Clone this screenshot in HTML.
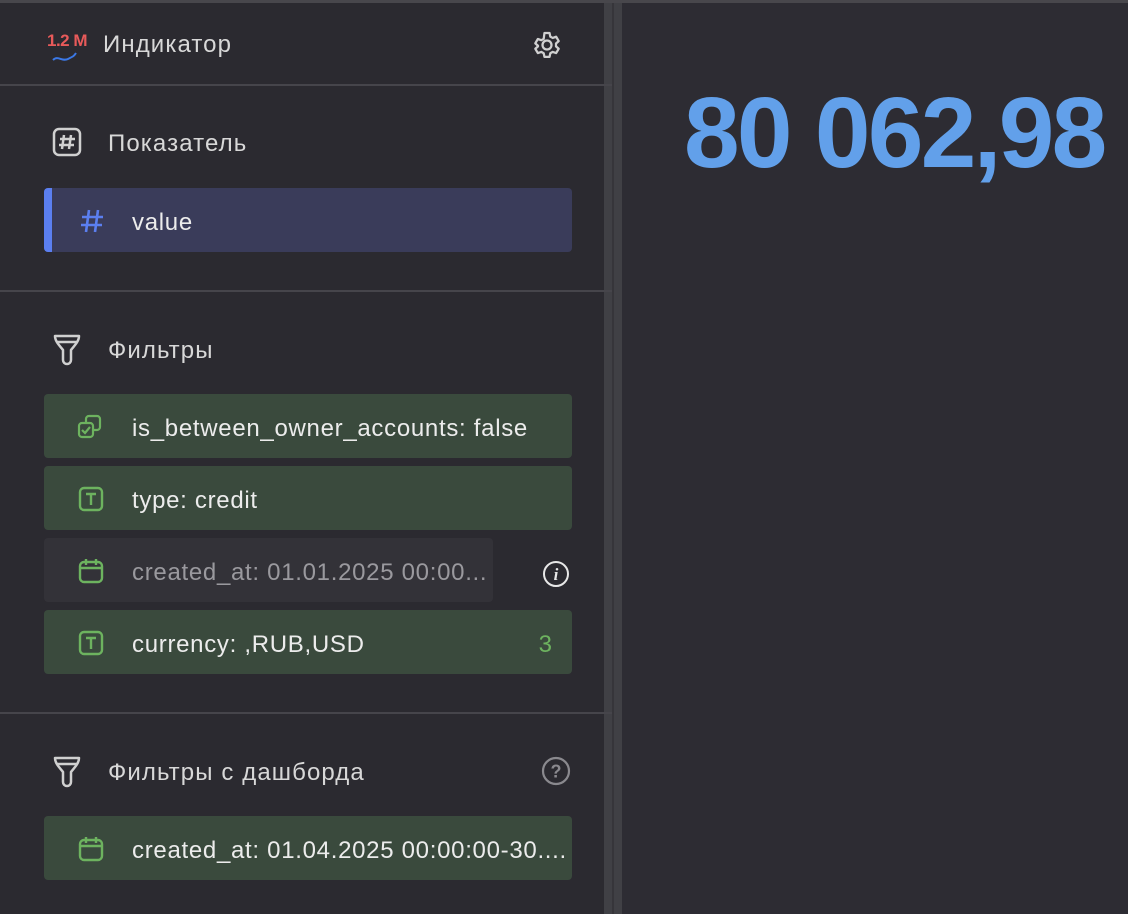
<!DOCTYPE html>
<html><head><meta charset="utf-8"><style>
*{margin:0;padding:0;box-sizing:border-box}
body{width:1128px;height:914px;background:#2b2a30;font-family:"Liberation Sans","DejaVu Sans",sans-serif;overflow:hidden;position:relative;color:#e6e6e6}
.top{position:absolute;left:0;top:0;width:1128px;height:3px;background:#48474c}
.div{position:absolute;left:604px;top:3px;width:18px;height:911px;background:#404045}
.div2{position:absolute;left:612px;top:3px;width:2px;height:911px;background:#36353a}
.right{position:absolute;left:622px;top:3px;right:0;bottom:0;background:#2d2c33}
.hl{position:absolute;left:0;width:612px;height:2px;background:#46454b}
.t{position:absolute;white-space:nowrap}
.h{font-size:24px;letter-spacing:1.1px;color:#d8d8d8}
.item{position:absolute;left:44px;width:528px;height:64px;border-radius:4px;background:#3a4a3d}
.item .ic{position:absolute;left:34px;top:20px}
.item .tx{position:absolute;left:88px;top:3px;line-height:64px;font-size:24px;letter-spacing:0.7px;color:#ececec;white-space:nowrap}
</style></head><body>
<div class="top"></div>
<div class="right"></div>
<div class="div"></div><div class="div2"></div>

<div class="t" style="left:47px;top:31px;font-size:17px;font-weight:bold;color:#e85a5a;letter-spacing:-0.5px">1.2 M</div>
<svg class="t" style="left:50px;top:50px" width="30" height="14"><path d="M3 10 C8 5,12 12,18 9 S24 6,26 3" stroke="#3b78e7" stroke-width="2" fill="none"/></svg>
<div class="t h" style="left:103px;top:31px">Индикатор</div>
<svg class="t" style="left:529px;top:27px" width="36" height="36" viewBox="0 0 24 24"><path d="M10.3 2.5h3.4l.5 2.4 1.6.9 2.3-.8 1.7 2.9-1.8 1.6v1.9l1.8 1.6-1.7 2.9-2.3-.8-1.6.9-.5 2.4h-3.4l-.5-2.4-1.6-.9-2.3.8-1.7-2.9 1.8-1.6V11l-1.8-1.6 1.7-2.9 2.3.8 1.6-.9z" transform="translate(0 1.5)" fill="none" stroke="#d0d0d0" stroke-width="1.5" stroke-linejoin="round"/><circle cx="12" cy="12" r="3" fill="none" stroke="#d0d0d0" stroke-width="1.5"/></svg>
<div class="hl" style="top:84px"></div>

<svg class="t" style="left:52px;top:127px" width="30" height="30" viewBox="0 0 30 30"><rect x="2" y="2" width="26" height="26" rx="5" fill="none" stroke="#d0d0d0" stroke-width="2.5"/><path d="M12 8l-2 14M19 8l-2 14M8 12h15M7 18h15" stroke="#d0d0d0" stroke-width="2.5"/></svg>
<div class="t h" style="left:108px;top:130px">Показатель</div>
<div class="item" style="top:188px;background:#3a3c5a;overflow:hidden"><div style="position:absolute;left:0;top:0;width:8px;height:64px;background:#5b7ff0"></div>
<svg class="t" style="left:34px;top:20px" width="28" height="26" viewBox="0 0 28 26"><path d="M11 2L8 24M20 2L17 24M4 9h21M3 17h21" stroke="#5b7ff0" stroke-width="2.6"/></svg>
<div class="tx">value</div></div>
<div class="hl" style="top:290px"></div>

<svg class="t" style="left:52px;top:332px" width="30" height="34" viewBox="0 0 30 34"><path d="M3 4h24c0 6-6 11-8 14v10a4 4 0 0 1-8 0V18C9 15 3 10 3 4z" fill="none" stroke="#d0d0d0" stroke-width="2.5" stroke-linejoin="round"/><path d="M5 10h20" stroke="#d0d0d0" stroke-width="2.5"/></svg>
<div class="t h" style="left:108px;top:337px">Фильтры</div>

<div class="item" style="top:394px"><svg class="ic" style="left:33px;top:20px" width="26" height="26" viewBox="0 0 26 26"><rect x="9" y="2" width="14" height="14" rx="3" fill="none" stroke="#6db35f" stroke-width="2.2"/><rect x="2" y="9" width="14" height="14" rx="3" fill="#3a4a3d" stroke="#6db35f" stroke-width="2.2"/><path d="M5 16l3 3 5-6" fill="none" stroke="#6db35f" stroke-width="2.2"/></svg><div class="tx">is_between_owner_accounts: false</div></div>

<div class="item" style="top:466px"><svg class="ic" width="26" height="26" viewBox="0 0 26 26"><rect x="2" y="2" width="22" height="22" rx="4" fill="none" stroke="#6db35f" stroke-width="2.4"/><path d="M8 8h10M13 8v11" stroke="#6db35f" stroke-width="2.4"/></svg><div class="tx">type: credit</div></div>

<div class="item" style="top:538px;width:449px;background:#333238"><svg class="ic" width="26" height="26" viewBox="0 0 26 26"><rect x="2" y="4" width="22" height="20" rx="4" fill="none" stroke="#6db35f" stroke-width="2.4"/><path d="M2 10h22M8 1v6M18 1v6" stroke="#6db35f" stroke-width="2.4"/></svg><div class="tx" style="color:#9a999e">created_at: 01.01.2025 00:00...</div></div>
<svg class="t" style="left:542px;top:560px" width="28" height="28" viewBox="0 0 28 28"><circle cx="14" cy="14" r="12" fill="none" stroke="#e8e8e8" stroke-width="2"/><text x="14" y="20" text-anchor="middle" font-family="Liberation Serif" font-style="italic" font-weight="bold" font-size="17" fill="#e8e8e8">i</text></svg>

<div class="item" style="top:610px"><svg class="ic" width="26" height="26" viewBox="0 0 26 26"><rect x="2" y="2" width="22" height="22" rx="4" fill="none" stroke="#6db35f" stroke-width="2.4"/><path d="M8 8h10M13 8v11" stroke="#6db35f" stroke-width="2.4"/></svg><div class="tx">currency: ,RUB,USD</div><div class="t" style="right:20px;top:3px;line-height:64px;font-size:24px;color:#6db35f">3</div></div>
<div class="hl" style="top:712px"></div>

<svg class="t" style="left:52px;top:754px" width="30" height="34" viewBox="0 0 30 34"><path d="M3 4h24c0 6-6 11-8 14v10a4 4 0 0 1-8 0V18C9 15 3 10 3 4z" fill="none" stroke="#d0d0d0" stroke-width="2.5" stroke-linejoin="round"/><path d="M5 10h20" stroke="#d0d0d0" stroke-width="2.5"/></svg>
<div class="t h" style="left:108px;top:759px">Фильтры с дашборда</div>
<svg class="t" style="left:541px;top:756px" width="30" height="30" viewBox="0 0 30 30"><circle cx="15" cy="15" r="13" fill="none" stroke="#8a898e" stroke-width="2.2"/><text x="15" y="21.5" text-anchor="middle" font-family="Liberation Sans" font-weight="bold" font-size="18" fill="#8a898e">?</text></svg>
<div class="item" style="top:816px"><svg class="ic" width="26" height="26" viewBox="0 0 26 26"><rect x="2" y="4" width="22" height="20" rx="4" fill="none" stroke="#6db35f" stroke-width="2.4"/><path d="M2 10h22M8 1v6M18 1v6" stroke="#6db35f" stroke-width="2.4"/></svg><div class="tx">created_at: 01.04.2025 00:00:00-30....</div></div>

<div class="t" style="left:684px;top:78px;font-size:100px;font-weight:bold;color:#62a0ea;letter-spacing:-2.7px;line-height:110px">80 062,98</div>
</body></html>
